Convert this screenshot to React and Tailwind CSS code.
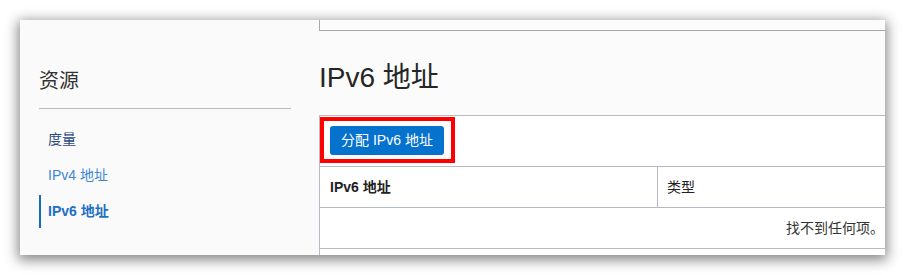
export default function App() {
  const font = { fontFamily: '"Liberation Sans", "Noto Sans CJK SC", sans-serif' };
  return (
    <div className="w-[905px] h-[275px] bg-white p-5" style={font}>
      <div className="flex h-[235px] w-[865px] overflow-hidden bg-[#fafafa] shadow-[0_3px_12px_2px_rgba(0,0,0,0.48)]">
        <aside className="w-[299px] shrink-0 pl-[19px] pr-[28px] pt-[47px]">
          <h2 className="h-[28px] text-[20px] leading-[28px] text-[#333]">资源</h2>
          <div className="mt-[13px] h-px bg-[#b6bac3]" />
          <nav className="mt-[12px] flex flex-col text-[14px]">
            <div className="flex h-9 items-center pl-[9px] text-[#2d4b7c]">度量</div>
            <div className="flex h-9 items-center pl-[9px] text-[#3c87d4]">IPv4 地址</div>
            <div className="flex h-9 items-center">
              <div className="flex h-[33px] items-center border-l-2 border-[#0f6dc8] pl-[7px] font-bold text-[#1f6fc5]">
                IPv6 地址
              </div>
            </div>
          </nav>
        </aside>
        <main className="flex flex-1 flex-col bg-white">
          <div className="h-[11px] shrink-0 border-b border-l border-[#a8a8a8] bg-[#fcfcfc]" />
          <div className="h-[85px] shrink-0 border-b border-[#b6bac3] bg-[#fbfbfb] pt-[31px]">
            <h1 className="text-[28px] leading-[32px] text-[#262626]">IPv6 地址</h1>
          </div>
          <div className="flex-1 border-l border-[#b6bac3] bg-white pt-px">
            <div className="inline-flex border-4 border-[#ff0000] pb-[4px] pl-[6px] pr-[7px] pt-[5px]">
              <button className="flex h-[29px] w-[114px] items-center justify-center rounded-[3px] bg-[#0572ce] text-[14px] text-white">
                分配 IPv6 地址
              </button>
            </div>
            <div className="mt-[3px] border-t border-[#b6bac3] text-[14px] text-[#222]">
              <div className="grid h-[41px] grid-cols-[337px_1fr] border-b border-[#b6bac3]">
                <div className="flex items-center pl-[10px] font-bold">IPv6 地址</div>
                <div className="flex items-center border-l border-[#b6bac3] pl-[9px]">类型</div>
              </div>
              <div className="flex h-[41px] items-center justify-end border-b border-[#b6bac3] pr-px text-[#333]">
                找不到任何项。
              </div>
            </div>
          </div>
        </main>
      </div>
    </div>
  );
}
